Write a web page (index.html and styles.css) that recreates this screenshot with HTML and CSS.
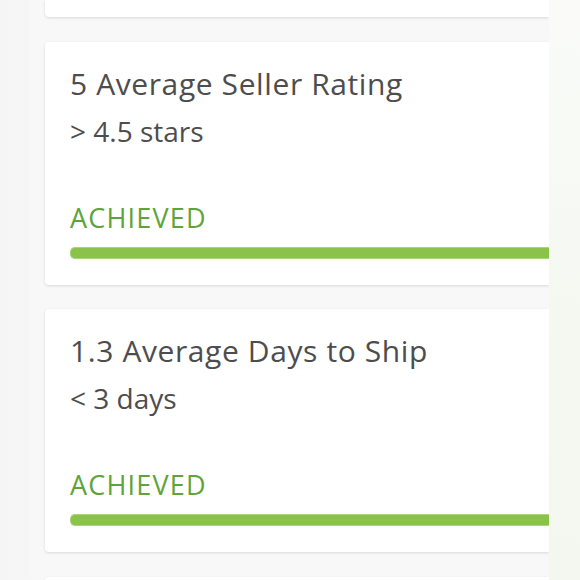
FILE: index.html
```html
<!DOCTYPE html>
<html>
<head>
<meta charset="utf-8">
<link rel="stylesheet" href="styles.css">
</head>
<body>
<div class="page">
  <div class="gutter-left"></div>
  <main class="feed">
    <section class="card card-stub"></section>
    <section class="card">
      <h2 class="title">5 Average Seller Rating</h2>
      <p class="goal">&gt; 4.5 stars</p>
      <p class="status">ACHIEVED</p>
      <div class="bar"></div>
    </section>
    <section class="card">
      <h2 class="title">1.3 Average Days to Ship</h2>
      <p class="goal">&lt; 3 days</p>
      <p class="status">ACHIEVED</p>
      <div class="bar"></div>
    </section>
    <section class="card card-tail"></section>
  </main>
  <div class="gutter-right"></div>
</div>
</body>
</html>
```
FILE: styles.css
```css
html, body {
  margin: 0;
  padding: 0;
  width: 580px;
  height: 580px;
  overflow: hidden;
  background: #f8f8f8;
  font-family: "Open Sans", "Liberation Sans", sans-serif;
}
.page {
  display: flex;
  height: 580px;
  overflow: hidden;
}
.gutter-left {
  width: 30px;
  flex: none;
  background: linear-gradient(90deg, #f5f5f5, #f6f6f6);
}
.gutter-right {
  width: 31px;
  flex: none;
  background: linear-gradient(180deg, #fafbf9 0%, #f4f8f0 60%, #f3f7ef 100%);
}
.feed {
  flex: none;
  width: 504px;
  padding-left: 15px;
  display: flex;
  flex-direction: column;
  gap: 24.5px;
}
.card {
  flex: none;
  background: #ffffff;
  border-radius: 4px 0 0 4px;
  box-shadow: 0 1px 3px rgba(0, 0, 0, 0.13);
  height: 243px;
  box-sizing: border-box;
  padding: 23px 0 0 25px;
}
.card-stub {
  height: 17px;
  border-radius: 0 0 0 4px;
  padding: 0;
}
.card-tail {
  height: 10px;
  padding: 0;
}
.title {
  margin: 0;
  font-weight: 400;
  font-size: 30px;
  line-height: 38px;
  color: #4d4d4d;
  letter-spacing: 0.6px;
}
.goal {
  margin: 10px 0 0;
  font-size: 28px;
  line-height: 36px;
  color: #4d4d4d;
}
.status {
  margin: 51px 0 0;
  font-size: 27px;
  line-height: 36px;
  color: #5ea43a;
  letter-spacing: 1.2px;
}
.bar {
  margin-top: 11px;
  height: 12px;
  background: #8bc34a;
  border: 1px solid #a9d57c;
  border-right: none;
  border-radius: 5px 0 0 5px;
  box-sizing: border-box;
}
```
